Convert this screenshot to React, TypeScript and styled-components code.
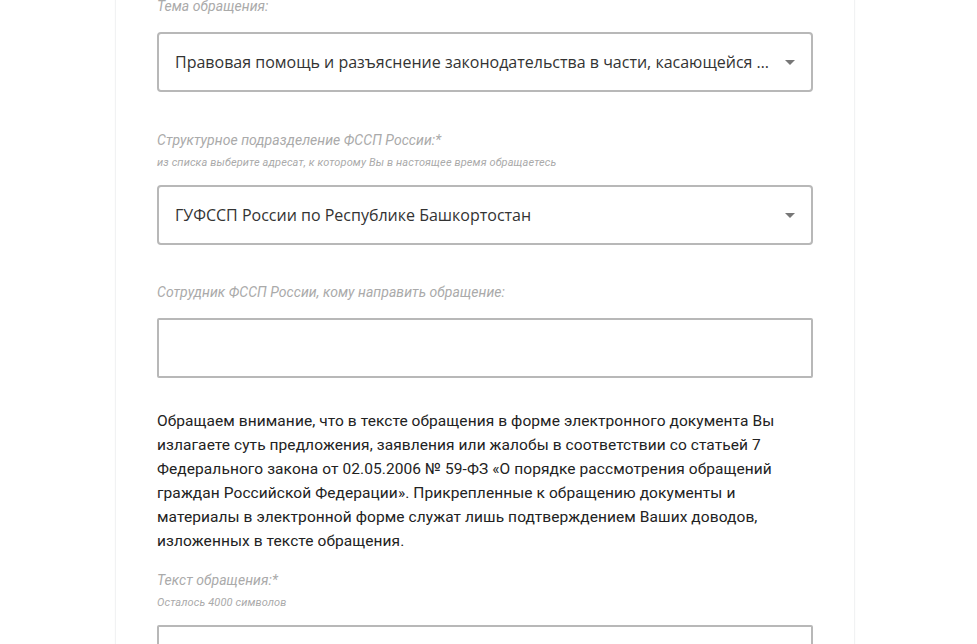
import React from 'react'
import styled, { createGlobalStyle } from 'styled-components'

const GlobalStyle = createGlobalStyle`
    html, body {
        margin: 0;
        padding: 0;
        background: #ffffff;
    }
    * {
        box-sizing: border-box;
    }
`

type FieldProps = {
    label: string
    hint?: string
    gap?: number
    children: React.ReactNode
}

function Field({ label, hint, gap = 38, children }: FieldProps) {
    return (
        <FieldBox $gap={gap}>
            <Label>{label}</Label>
            {hint && <Hint>{hint}</Hint>}
            <ControlSlot $hasHint={!!hint}>{children}</ControlSlot>
        </FieldBox>
    )
}

function Select({ value }: { value: string }) {
    return (
        <SelectBox>
            <SelectValue>{value}</SelectValue>
            <Arrow />
        </SelectBox>
    )
}

export default function App() {
    return (
        <Page>
            <GlobalStyle />
            <Card>
                <Field label="Тема обращения:" gap={40}>
                    <Select value="Правовая помощь и разъяснение законодательства в части, касающейся деятельности ФССП России" />
                </Field>

                <Field
                    label="Структурное подразделение ФССП России:*"
                    hint="из списка выберите адресат, к которому Вы в настоящее время обращаетесь"
                    gap={39}
                >
                    <Select value="ГУФССП России по Республике Башкортостан" />
                </Field>

                <Field label="Сотрудник ФССП России, кому направить обращение:">
                    <TextInput type="text" />
                </Field>

                <Notice>
                    Обращаем внимание, что в тексте обращения в форме электронного документа Вы
                    <br />
                    излагаете суть предложения, заявления или жалобы в соответствии со статьей 7
                    <br />
                    Федерального закона от 02.05.2006 № 59-ФЗ «О порядке рассмотрения обращений
                    <br />
                    граждан Российской Федерации». Прикрепленные к обращению документы и
                    <br />
                    материалы в электронной форме служат лишь подтверждением Ваших доводов,
                    <br />
                    изложенных в тексте обращения.
                </Notice>

                <Field label="Текст обращения:*" hint="Осталось 4000 символов">
                    <TextArea />
                </Field>
            </Card>
        </Page>
    )
}

const Page = styled.div`
    height: 644px;
    overflow: hidden;
    background: #ffffff;
`

const Card = styled.div`
    margin-left: 115px;
    width: 740px;
    min-height: 700px;
    padding: 0 41px 0 41px;
    background: #ffffff;
    border-left: 1px solid #f1f2f3;
    border-right: 1px solid #f1f2f3;
    box-shadow: 0 0 2px rgba(0, 0, 0, 0.03);
`

const FieldBox = styled.div<{ $gap: number }>`
    margin-bottom: ${(p) => p.$gap}px;

    &:first-child {
        margin-top: -2px;
    }
`

const Label = styled.div`
    font-family: Roboto, 'Liberation Sans', sans-serif;
    font-style: italic;
    font-size: 14px;
    line-height: 16px;
    letter-spacing: 0.05px;
    color: #aaaaaa;
`

const Hint = styled.div`
    margin-top: 9px;
    font-family: Roboto, 'Liberation Sans', sans-serif;
    font-style: italic;
    font-size: 11px;
    line-height: 12px;
    letter-spacing: 0.12px;
    color: #aaaaaa;
`

const ControlSlot = styled.div<{ $hasHint: boolean }>`
    margin-top: ${(p) => (p.$hasHint ? '16px' : '18px')};
`

const SelectBox = styled.div`
    display: flex;
    align-items: center;
    height: 60px;
    padding: 0 16px 0 16px;
    border: 2px solid #b8b8b8;
    border-radius: 4px;
    background: #ffffff;
`

const SelectValue = styled.div`
    flex: 1;
    min-width: 0;
    padding-right: 14px;
    white-space: nowrap;
    overflow: hidden;
    text-overflow: ellipsis;
    font-family: 'Open Sans', sans-serif;
    font-size: 16px;
    color: #333333;
`

const Arrow = styled.span`
    width: 0;
    height: 0;
    border-left: 5px solid transparent;
    border-right: 5px solid transparent;
    border-top: 5px solid #777777;
`

const TextInput = styled.input`
    display: block;
    width: 100%;
    height: 60px;
    padding: 0 16px;
    border: 2px solid #b8b8b8;
    border-radius: 2px;
    background: #ffffff;
    font-family: 'Open Sans', sans-serif;
    font-size: 16px;
    outline: none;
`

const TextArea = styled.textarea`
    display: block;
    width: 100%;
    height: 160px;
    padding: 16px;
    border: 2px solid #b8b8b8;
    border-radius: 2px;
    resize: none;
    font-family: 'Open Sans', sans-serif;
    font-size: 16px;
    outline: none;
`

const Notice = styled.p`
    margin: -7px 0 19px;
    white-space: nowrap;
    font-family: Roboto, 'Liberation Sans', sans-serif;
    font-size: 15.5px;
    line-height: 24px;
    letter-spacing: 0.08px;
    color: #222222;
`
